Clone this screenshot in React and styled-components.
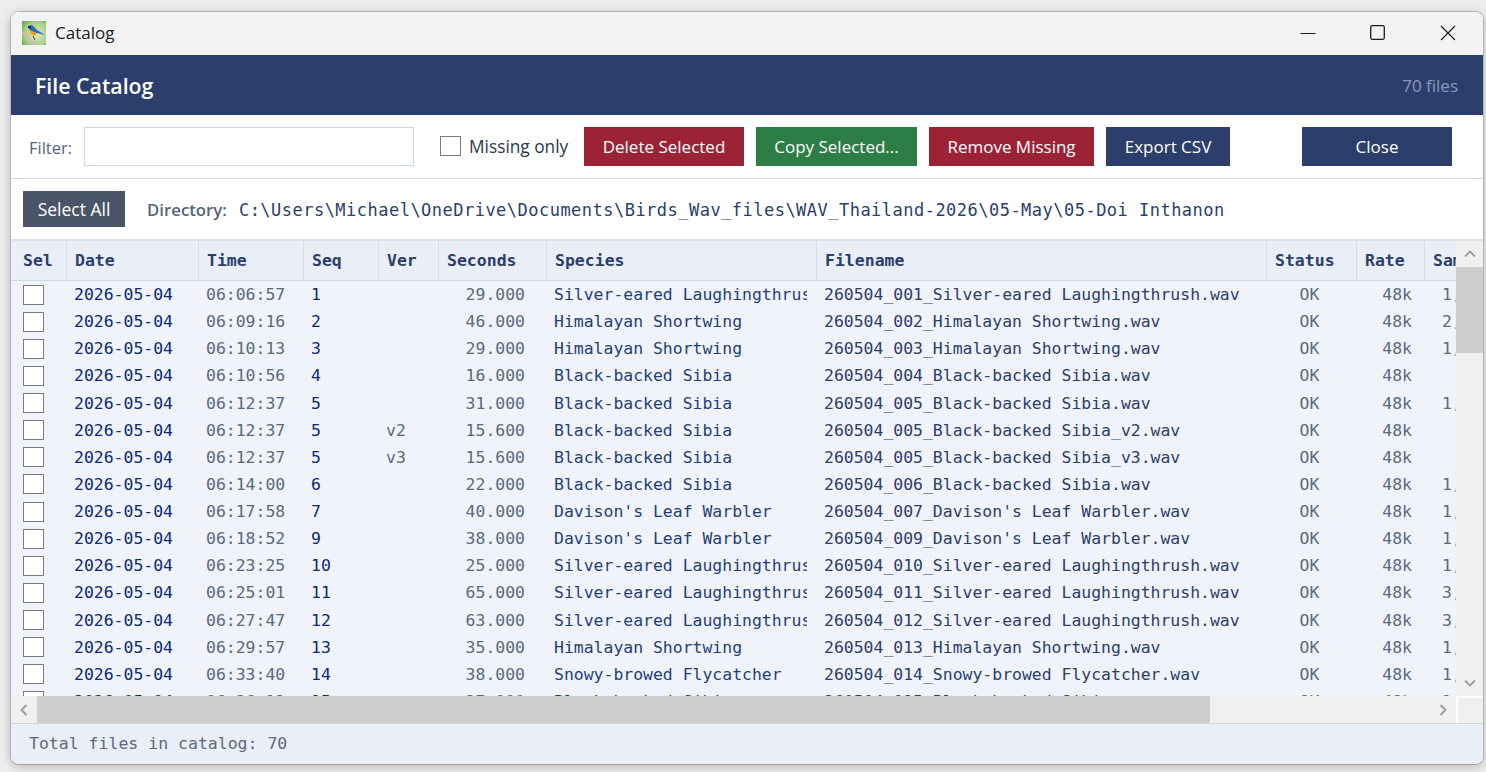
import React from "react";
import styled, { createGlobalStyle } from "styled-components";

const UI = `"Open Sans", "Noto Sans", sans-serif`;
const MONO = `"DejaVu Sans Mono", "Liberation Mono", monospace`;

const columns = [
  { key: "sel", title: "Sel", width: 56 },
  { key: "date", title: "Date", width: 132 },
  { key: "time", title: "Time", width: 105 },
  { key: "seq", title: "Seq", width: 75 },
  { key: "ver", title: "Ver", width: 60 },
  { key: "secs", title: "Seconds", width: 108 },
  { key: "species", title: "Species", width: 270 },
  { key: "file", title: "Filename", width: 450 },
  { key: "status", title: "Status", width: 90 },
  { key: "rate", title: "Rate", width: 68 },
  { key: "samples", title: "Samples", width: 110 },
];

const silver = "Silver-eared Laughingthrush";
const shortwing = "Himalayan Shortwing";
const sibia = "Black-backed Sibia";
const warbler = "Davison's Leaf Warbler";
const flycatcher = "Snowy-browed Flycatcher";

const rows = [
  ["06:06:57", "1", "", "29.000", silver, "001", "1,"],
  ["06:09:16", "2", "", "46.000", shortwing, "002", "2,"],
  ["06:10:13", "3", "", "29.000", shortwing, "003", "1,"],
  ["06:10:56", "4", "", "16.000", sibia, "004", ""],
  ["06:12:37", "5", "", "31.000", sibia, "005", "1,"],
  ["06:12:37", "5", "v2", "15.600", sibia, "005", ""],
  ["06:12:37", "5", "v3", "15.600", sibia, "005", ""],
  ["06:14:00", "6", "", "22.000", sibia, "006", "1,"],
  ["06:17:58", "7", "", "40.000", warbler, "007", "1,"],
  ["06:18:52", "9", "", "38.000", warbler, "009", "1,"],
  ["06:23:25", "10", "", "25.000", silver, "010", "1,"],
  ["06:25:01", "11", "", "65.000", silver, "011", "3,"],
  ["06:27:47", "12", "", "63.000", silver, "012", "3,"],
  ["06:29:57", "13", "", "35.000", shortwing, "013", "1,"],
  ["06:33:40", "14", "", "38.000", flycatcher, "014", "1,"],
  ["06:36:12", "15", "", "27.000", sibia, "015", "1,"],
];

const GlobalStyle = createGlobalStyle`
  html, body {
    margin: 0;
    height: 100%;
    overflow: hidden;
    background: #ececec;
  }
`;

const Desktop = styled.div`
  width: 1486px;
  height: 772px;
  box-sizing: border-box;
  padding: 11px 2px 7px 10px;
  background: #ededed;
`;

const Window = styled.div`
  height: 100%;
  box-sizing: border-box;
  display: flex;
  flex-direction: column;
  border: 1px solid #b4b4b4;
  border-bottom-color: #a4a4a4;
  border-radius: 9px;
  overflow: hidden;
  background: #fff;
  box-shadow: 0 2px 8px rgba(0, 0, 0, 0.22);
`;

const TitleBar = styled.div`
  flex: 0 0 43px;
  box-sizing: border-box;
  display: flex;
  align-items: center;
  padding: 0 0 1px 11px;
  background: #f3f3f3;
  font: 17px ${UI};
  color: #1a1a1a;
`;

const TitleText = styled.span`
  margin: 0 0 1px 9px;
  flex: 1;
`;

const WinButton = styled.div`
  width: 70px;
  height: 42px;
  display: flex;
  align-items: center;
  justify-content: center;
`;

const Banner = styled.header`
  flex: 0 0 60px;
  display: flex;
  align-items: center;
  justify-content: space-between;
  padding: 0 25px 0 24px;
  background: #2c3e6b;
`;

const BannerTitle = styled.h1`
  margin: 0;
  font: 600 21.3px ${UI};
  color: #fff;
`;

const BannerCount = styled.span`
  font: 17px ${UI};
  color: #8a9bbd;
`;

const FilterBar = styled.div`
  flex: 0 0 64px;
  box-sizing: border-box;
  display: flex;
  align-items: center;
  padding: 0 31px 1px 18px;
  border-bottom: 1px solid #cdd8e6;
`;

const FilterLabel = styled.label`
  width: 55px;
  padding-top: 2px;
  font: 16.5px ${UI};
  color: #55657a;
`;

const FilterInput = styled.input`
  width: 330px;
  height: 39px;
  box-sizing: border-box;
  border: 1px solid #cdd8e6;
  background: #fff;
  margin-right: 26px;
`;

const Box = styled.span`
  display: block;
  box-sizing: border-box;
  width: 21px;
  height: 20px;
  background: #fff;
  border: 1px solid #7b7b7b;
`;

const MissingLabel = styled.span`
  width: 115px;
  font: 17.3px ${UI};
  color: #2d3748;
  margin-left: 8px;
  white-space: nowrap;
`;

const ActionButton = styled.button`
  height: 39px;
  width: ${(p) => p.$width}px;
  margin-right: ${(p) => p.$gap || 0}px;
  padding: 0;
  border: 0;
  background: ${(p) => p.$bg};
  color: #fff;
  font: 17px ${UI};
`;

const DirectoryBar = styled.div`
  flex: 0 0 62px;
  box-sizing: border-box;
  display: flex;
  align-items: center;
  padding: 0 0 0 12px;
  border-bottom: 2px solid #dbe2ec;
`;

const SelectAll = styled.button`
  width: 102px;
  height: 36px;
  padding: 0;
  border: 0;
  background: #4a5568;
  color: #fff;
  font: 17.5px ${UI};
`;

const DirectoryLabel = styled.span`
  margin-left: 22px;
  font: 600 16.8px ${UI};
  color: #55657a;
`;

const DirectoryPath = styled.span`
  margin-left: 12px;
  padding-top: 2px;
  font: 17px ${MONO};
  letter-spacing: 0.48px;
  color: #2c3e6b;
  white-space: nowrap;
`;

const GridArea = styled.div`
  flex: 0 0 482px;
  display: grid;
  grid-template-columns: 1445px 27px;
  grid-template-rows: 455px 27px;
  background: #f0f3f9;
`;

const TableClip = styled.div`
  overflow: hidden;
  display: flex;
  flex-direction: column;
`;

const HeaderRow = styled.div`
  flex: 0 0 40px;
  box-sizing: border-box;
  display: flex;
  background: #e9eef7;
  border-bottom: 1px solid #cdd8e6;
`;

const HeaderCell = styled.div`
  flex: 0 0 ${(p) => p.$width}px;
  box-sizing: border-box;
  padding: 1px 0 0 ${(p) => (p.$first ? 12 : 8)}px;
  border-right: 1px solid #d9dde3;
  font: 700 16.5px/38px ${MONO};
  color: #2c3e6b;
  white-space: nowrap;
  overflow: hidden;
`;

const Row = styled.div`
  flex: 0 0 27.13px;
  display: flex;
  align-items: center;
  background: #f0f3f9;
`;

const CellColors = {
  date: "#0b2a78",
  seq: "#0b2a78",
  species: "#1f3f7a",
  file: "#2c3e6b",
};

const Cell = styled.div`
  flex: 0 0 ${(p) => p.$width}px;
  box-sizing: border-box;
  display: flex;
  justify-content: ${(p) => p.$justify || "flex-start"};
  padding: ${(p) => p.$pad || "0 0 0 7px"};
  margin-right: ${(p) => p.$clip || 0}px;
  font: 16.45px ${MONO};
  color: ${(p) => CellColors[p.$kind] || "#5a6a80"};
  white-space: nowrap;
  overflow: hidden;
`;

const VerticalBar = styled.div`
  grid-column: 2;
  grid-row: 1;
  display: flex;
  flex-direction: column;
  background: #f0f0f0;
`;

const ArrowSlot = styled.div`
  flex: 0 0 ${(p) => p.$size}px;
  display: flex;
  align-items: center;
  justify-content: center;
  background: #f0f0f0;
`;

const VerticalThumb = styled.div`
  flex: 0 0 86px;
  background: #cdcdcd;
`;

const Spacer = styled.div`
  flex: 1;
`;

const HorizontalBar = styled.div`
  grid-column: 1;
  grid-row: 2;
  display: flex;
  background: #f0f0f0;
`;

const HorizontalThumb = styled.div`
  flex: 0 0 1173px;
  background: #cdcdcd;
`;

const Corner = styled.div`
  grid-column: 2;
  grid-row: 2;
  box-sizing: border-box;
  border: 2px solid #fff;
  border-right: 0;
  border-bottom: 0;
  background: #f0f0f0;
`;

const StatusBar = styled.footer`
  flex: 1;
  box-sizing: border-box;
  display: flex;
  align-items: center;
  padding: 0 0 2px 18px;
  background: #e9eef7;
  border-top: 1px solid #cdd8e6;
  font: 16.5px ${MONO};
  color: #5a6a80;
`;

const Chevron = ({ d }) => (
  <svg width="14" height="14" viewBox="0 0 14 14" fill="none" stroke="#9a9a9a" strokeWidth="1.8">
    <path d={d} />
  </svg>
);

const BirdIcon = () => (
  <svg width="24" height="24" viewBox="0 0 24 24">
    <defs>
      <radialGradient id="birdBg" cx="0.6" cy="0.55" r="0.8">
        <stop offset="0" stopColor="#dcebc4" />
        <stop offset="0.6" stopColor="#a9cf8a" />
        <stop offset="1" stopColor="#5f9e48" />
      </radialGradient>
    </defs>
    <rect width="24" height="24" fill="url(#birdBg)" />
    <path d="M0 11 L14 24" stroke="#d9b9a6" strokeWidth="2" fill="none" />
    <path d="M6 6 L12 5 L16 11 L13 15 L9 13 Z" fill="#e8a020" />
    <path d="M6 5 L10 4 L15 9 L23 14 L15 12 L8 9 Z" fill="#1f6fc4" />
    <path d="M6 5 L9 5 L9 8 L6 7 Z" fill="#14305f" />
    <path d="M11 15 L13 19" stroke="#5a4020" strokeWidth="1" />
  </svg>
);

const Catalog = () => (
  <Window>
    <TitleBar>
      <BirdIcon />
      <TitleText>Catalog</TitleText>
      <WinButton>
        <svg width="16" height="16" viewBox="0 0 16 16" stroke="#1a1a1a" strokeWidth="1" fill="none">
          <path d="M0.5 8.5 H15.5" />
        </svg>
      </WinButton>
      <WinButton>
        <svg width="16" height="16" viewBox="0 0 16 16" stroke="#1a1a1a" strokeWidth="1.3" fill="none">
          <rect x="0.7" y="0.7" width="13.6" height="13.6" rx="1.5" />
        </svg>
      </WinButton>
      <WinButton>
        <svg width="16" height="16" viewBox="0 0 16 16" stroke="#1a1a1a" strokeWidth="1.2" fill="none">
          <path d="M1 1 L15 15 M15 1 L1 15" />
        </svg>
      </WinButton>
    </TitleBar>

    <Banner>
      <BannerTitle>File Catalog</BannerTitle>
      <BannerCount>70 files</BannerCount>
    </Banner>

    <FilterBar>
      <FilterLabel>Filter:</FilterLabel>
      <FilterInput />
      <Box />
      <MissingLabel>Missing only</MissingLabel>
      <ActionButton $bg="#9b2335" $width={160} $gap={12}>Delete Selected</ActionButton>
      <ActionButton $bg="#2d7d46" $width={161} $gap={12}>Copy Selected...</ActionButton>
      <ActionButton $bg="#9b2335" $width={165} $gap={12}>Remove Missing</ActionButton>
      <ActionButton $bg="#2c3e6b" $width={124} $gap={72}>Export CSV</ActionButton>
      <ActionButton $bg="#2c3e6b" $width={150}>Close</ActionButton>
    </FilterBar>

    <DirectoryBar>
      <SelectAll>Select All</SelectAll>
      <DirectoryLabel>Directory:</DirectoryLabel>
      <DirectoryPath>C:\Users\Michael\OneDrive\Documents\Birds_Wav_files\WAV_Thailand-2026\05-May\05-Doi Inthanon</DirectoryPath>
    </DirectoryBar>

    <GridArea>
      <TableClip>
        <HeaderRow>
          {columns.map((c, i) => (
            <HeaderCell key={c.key} $width={c.width} $first={i === 0}>{c.title}</HeaderCell>
          ))}
        </HeaderRow>
        {rows.map(([time, seq, ver, secs, species, num, samples], i) => (
          <Row key={i}>
            <Cell $width={56} $pad="0 0 0 12px"><Box /></Cell>
            <Cell $width={132} $kind="date">2026-05-04</Cell>
            <Cell $width={105}>{time}</Cell>
            <Cell $width={75} $kind="seq">{seq}</Cell>
            <Cell $width={60}>{ver}</Cell>
            <Cell $width={108} $justify="flex-end" $pad="0 22px 0 0">{secs}</Cell>
            <Cell $width={260} $clip={10} $kind="species">{species}</Cell>
            <Cell $width={450} $kind="file">{`260504_${num}_${species}${ver ? "_" + ver : ""}.wav`}</Cell>
            <Cell $width={90} $justify="center" $pad="0 5px 0 0">OK</Cell>
            <Cell $width={68} $justify="flex-end" $pad="0 13px 0 0">48k</Cell>
            <Cell $width={110} $pad="0 0 0 17px">{samples}</Cell>
          </Row>
        ))}
      </TableClip>
      <VerticalBar>
        <ArrowSlot $size={26}><Chevron d="M2 9.5 L7 4.5 L12 9.5" /></ArrowSlot>
        <VerticalThumb />
        <Spacer />
        <ArrowSlot $size={26}><Chevron d="M2 4.5 L7 9.5 L12 4.5" /></ArrowSlot>
      </VerticalBar>
      <HorizontalBar>
        <ArrowSlot $size={26}><Chevron d="M9.5 2 L4.5 7 L9.5 12" /></ArrowSlot>
        <HorizontalThumb />
        <Spacer />
        <ArrowSlot $size={26}><Chevron d="M4.5 2 L9.5 7 L4.5 12" /></ArrowSlot>
      </HorizontalBar>
      <Corner />
    </GridArea>

    <StatusBar>Total files in catalog: 70</StatusBar>
  </Window>
);

const App = () => (
  <>
    <GlobalStyle />
    <Desktop>
      <Catalog />
    </Desktop>
  </>
);

export default App;
